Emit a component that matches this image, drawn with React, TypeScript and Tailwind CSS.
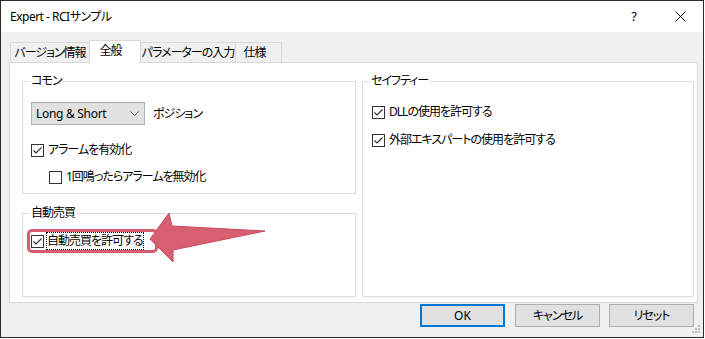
import { ReactNode } from 'react';

const jp = 'tracking-[-1px]';

function CheckBox({ checked }: { checked: boolean }) {
  return (
    <span className="flex h-[13px] w-[13px] shrink-0 items-center justify-center border border-[#333333] bg-white">
      {checked && (
        <svg width="11" height="11" viewBox="0 0 11 11">
          <path d="M1.5 5.5 L4 8 L9.5 2.5" stroke="#333333" strokeWidth="1.2" fill="none" />
        </svg>
      )}
    </span>
  );
}

function CheckRow({ checked, label }: { checked: boolean; label: string }) {
  return (
    <div className="flex h-[16px] items-center">
      <CheckBox checked={checked} />
      <span className={`ml-[4px] leading-[16px] whitespace-nowrap ${jp}`}>{label}</span>
    </div>
  );
}

function GroupBox({
  title,
  className,
  children,
}: {
  title: string;
  className: string;
  children: ReactNode;
}) {
  return (
    <fieldset className={`min-w-0 border border-[#dcdcdc] ${className}`}>
      <legend className={`ml-[6px] px-[2px] leading-[16px] ${jp}`}>{title}</legend>
      {children}
    </fieldset>
  );
}

function Tab({ label, className }: { label: string; className: string }) {
  return (
    <div
      className={`flex items-center justify-center border-[#d9d9d9] leading-[16px] whitespace-nowrap ${jp} ${className}`}
    >
      {label}
    </div>
  );
}

export default function App() {
  return (
    <div className="relative h-[339px] w-[705px] bg-white font-['Noto_Sans','Noto_Sans_CJK_JP',sans-serif] text-[12px] text-black [font-feature-settings:'palt']">
      <div className="flex h-[338px] w-[704px] flex-col border border-[#2b2b2b]">
        {/* title bar */}
        <div className="flex h-[31px] items-center bg-white">
          <span className="ml-[9px] leading-[16px] tracking-[-0.5px]">Expert - RCIサンプル</span>
          <div className="ml-auto flex h-full">
            <div className="flex w-[46px] items-center justify-center text-[13px]">?</div>
            <div className="flex w-[46px] items-center justify-center">
              <svg width="11" height="11" viewBox="0 0 11 11">
                <path d="M0.5 0.5 L10.5 10.5 M10.5 0.5 L0.5 10.5" stroke="#000" strokeWidth="1" />
              </svg>
            </div>
          </div>
        </div>

        <div className="flex flex-1 flex-col bg-[#f0f0f0] pt-[8px]">
          {/* tabs */}
          <div className="flex h-[22px] items-end pl-[9px]">
            <Tab label="バージョン情報" className="h-[20px] w-[79px] border-l border-t bg-[#f0f0f0]" />
            <Tab
              label="全般"
              className="relative z-10 -mb-px h-[23px] w-[52px] border-x border-t bg-white pr-[9px] pb-[2px]"
            />
            <Tab label="パラメーターの入力" className="h-[20px] w-[95px] border-r border-t bg-[#f0f0f0]" />
            <Tab label="仕様" className="h-[20px] w-[46px] border-r border-t bg-[#f0f0f0] pr-[8px]" />
          </div>

          {/* panel */}
          <div className="ml-[8px] flex h-[241px] w-[689px] border border-[#d9d9d9] bg-white pt-[10px] pl-[12px]">
            <div className="flex w-[334px] flex-col">
              <GroupBox title="コモン" className="h-[121px]">
                <div className="pl-[8px]">
                  <div className="mt-[13px] flex items-center">
                    <div className="flex h-[23px] w-[114px] items-center border border-[#adadad] bg-[#e1e1e1] pl-[4px] pr-[4px]">
                      <span className="leading-[16px] tracking-[-0.3px]">Long &amp; Short</span>
                      <svg className="ml-auto mr-[1px]" width="9" height="5" viewBox="0 0 9 5">
                        <path d="M0.5 0.5 L4.5 4.5 L8.5 0.5" stroke="#606060" strokeWidth="1" fill="none" />
                      </svg>
                    </div>
                    <span className={`ml-[8px] leading-[16px] ${jp}`}>ポジション</span>
                  </div>
                  <div className="mt-[17px]">
                    <CheckRow checked label="アラームを有効化" />
                  </div>
                  <div className="mt-[11px] pl-[18px]">
                    <CheckRow checked={false} label="1回鳴ったらアラームを無効化" />
                  </div>
                </div>
              </GroupBox>

              <GroupBox title="自動売買" className="mt-[11px] h-[92px]">
                <div className="mt-[8px] ml-[4px] flex h-[24px] w-[131px] items-center rounded-[5px] border-[3px] border-[#d65c70] pl-[1px]">
                  <CheckBox checked />
                  <span
                    className={`ml-[2px] flex h-[18px] items-center border border-dotted border-black leading-[16px] whitespace-nowrap ${jp}`}
                  >
                    自動売買を許可する
                  </span>
                </div>
              </GroupBox>
            </div>

            <GroupBox title="セイフティー" className="ml-[6px] h-[224px] w-[332px]">
              <div className="pl-[9px]">
                <div className="mt-[15px]">
                  <CheckRow checked label="DLLの使用を許可する" />
                </div>
                <div className="mt-[12px]">
                  <CheckRow checked label="外部エキスパートの使用を許可する" />
                </div>
              </div>
            </GroupBox>
          </div>

          {/* buttons */}
          <div className="mt-[1px] flex pr-[9px]">
            <button className="ml-auto h-[23px] w-[85px] border-2 border-[#0078d7] bg-[#e1e1e1] leading-[16px]">
              OK
            </button>
            <button className={`ml-[10px] h-[23px] w-[85px] border border-[#adadad] bg-[#e1e1e1] leading-[16px] ${jp}`}>
              キャンセル
            </button>
            <button className={`ml-[9px] h-[23px] w-[85px] border border-[#adadad] bg-[#e1e1e1] leading-[16px] ${jp}`}>
              リセット
            </button>
          </div>
        </div>
      </div>

      {/* size grip */}
      <svg className="pointer-events-none absolute left-[692px] top-[325px]" width="9" height="9" viewBox="0 0 9 9">
        <rect x="6" y="0" width="2" height="2" fill="#bdbdbd" />
        <rect x="3" y="3" width="2" height="2" fill="#bdbdbd" />
        <rect x="6" y="3" width="2" height="2" fill="#bdbdbd" />
        <rect x="0" y="6" width="2" height="2" fill="#bdbdbd" />
        <rect x="3" y="6" width="2" height="2" fill="#bdbdbd" />
        <rect x="6" y="6" width="2" height="2" fill="#bdbdbd" />
      </svg>

      {/* annotation arrow */}
      <svg className="pointer-events-none absolute left-0 top-0" width="705" height="339" viewBox="0 0 705 339">
        <path
          d="M150 239 L169 213 L172 226 L265 231 L173 250 L173 262 Z"
          fill="#d65f72"
          stroke="#c84a5f"
          strokeWidth="1"
          strokeLinejoin="round"
        />
      </svg>
    </div>
  );
}
